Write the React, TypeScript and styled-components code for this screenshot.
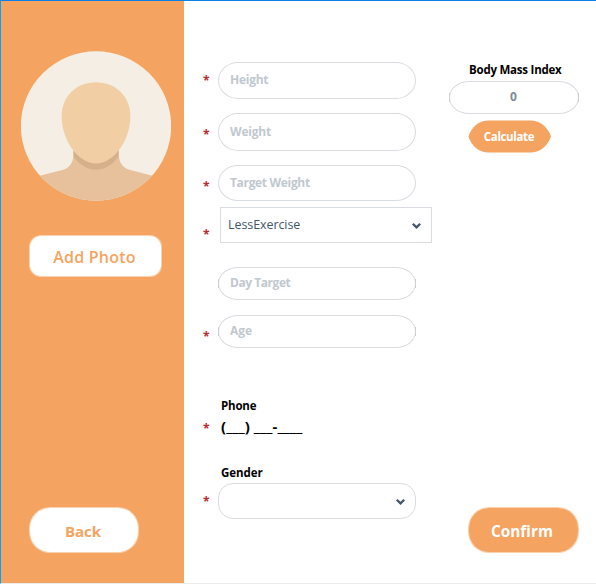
import React from "react";
import styled, { createGlobalStyle, css } from "styled-components";

const orange = "#f4a460";
const line = "#d9dce0";

const GlobalStyle = createGlobalStyle`
  * { box-sizing: border-box; }
  body { margin: 0; background: #fff; font-family: "Open Sans", "Noto Sans", sans-serif; }
  button { border: 0; padding: 0; margin: 0; font-family: inherit; cursor: pointer; }
`;

const Window = styled.div`
  display: grid;
  grid-template-columns: 183px 1fr;
  width: 596px;
  height: 584px;
  overflow: hidden;
  border-top: 1px solid #0a7fe6;
  border-left: 1px solid #07a2f8;
  border-bottom: 1px solid #ececec;
  background: #fff;
`;

const Sidebar = styled.aside`
  display: flex;
  flex-direction: column;
  align-items: flex-start;
  padding: 50px 0 30px 28px;
  background: ${orange};
`;

const Avatar = styled.svg`
  display: block;
  flex: none;
  width: 150px;
  height: 150px;
  margin-left: -8px;
`;

const Button = styled.button<{ $w: number; $h: number; $radius: string; $solid?: boolean; $size: number }>`
  display: flex;
  align-items: center;
  justify-content: center;
  flex: none;
  width: ${(p) => p.$w}px;
  height: ${(p) => p.$h}px;
  border: 1px solid ${(p) => (p.$solid ? "rgba(244, 164, 96, 0.5)" : "rgba(255, 255, 255, 0.5)")};
  border-radius: ${(p) => p.$radius};
  background: ${(p) => (p.$solid ? orange : "#fff")};
  background-clip: padding-box;
  color: ${(p) => (p.$solid ? "#fff" : orange)};
  font-size: ${(p) => p.$size}px;
  font-weight: 700;
`;

const PhotoButton = styled(Button)`
  margin-top: 34px;
  padding: 1px 2px 0 0;
  font-weight: 600;
`;

const BackButton = styled(Button)`
  margin-top: auto;
  padding: 1px 2px 0 0;
`;

const CalculateButton = styled(Button)`
  margin: 6px 0 0 19px;
  padding-right: 1px;
  border: 0;
  clip-path: path("M0.5 16.5 C3 8 10 0.5 21 0.5 H62 C73 0.5 80 8 83 16.5 C80 25 73 32.5 62 32.5 H21 C10 32.5 3 25 0.5 16.5 Z");
`;

const ConfirmButton = styled(Button)`
  margin: auto 0 0 19px;
  padding: 1px 3px 0 0;
`;

const Main = styled.main`
  display: grid;
  grid-template-columns: 248px 1fr;
`;

const Form = styled.form`
  display: flex;
  flex-direction: column;
  padding: 61px 0 0 19px;
`;

const Side = styled.section`
  display: flex;
  flex-direction: column;
  align-items: flex-start;
  padding: 61px 0 30px 17px;
`;

const Row = styled.div<{ $gap?: number }>`
  display: flex;
  align-items: flex-start;
  margin-top: ${(p) => p.$gap ?? 0}px;
`;

const Star = styled.span<{ $top: number }>`
  flex: none;
  width: 15px;
  height: 14px;
  margin-top: ${(p) => p.$top}px;
  color: #b8282c;
  font-size: 12px;
  font-weight: 700;
  line-height: 14px;
`;

const Text = styled.span<{ $track?: number }>`
  letter-spacing: ${(p) => p.$track ?? 0}px;
  white-space: nowrap;
`;

const ticks = css`
  &::before,
  &::after {
    content: "";
    position: absolute;
    top: 11px;
    width: 1px;
    height: 9px;
    background: #cdd1d6;
  }
  &::before { left: -1px; }
  &::after { right: -1px; }
`;

const Field = styled.div<{ $h: number; $w?: number; $ticks?: boolean }>`
  position: relative;
  display: flex;
  align-items: center;
  flex: none;
  width: ${(p) => p.$w ?? 198}px;
  height: ${(p) => p.$h}px;
  padding: 0 11px 2px;
  border: 1px solid ${line};
  border-radius: 20px / 50%;
  color: #c1c8cf;
  font-size: 12px;
  font-weight: 700;
  ${(p) => p.$ticks && ticks}
`;

const Value = styled(Field)`
  justify-content: center;
  padding-right: 12px;
  color: #7d8a96;
`;

const Select = styled.div<{ $w: number; $round?: boolean }>`
  display: flex;
  align-items: center;
  justify-content: space-between;
  width: ${(p) => p.$w}px;
  height: 36px;
  margin-left: ${(p) => (p.$round ? 0 : 2)}px;
  padding: 0 9px 1px 7px;
  border: 1px solid ${line};
  border-radius: ${(p) => (p.$round ? 15 : 0)}px;
  color: #44566c;
  font-size: 12.5px;
`;

const Chevron = styled.svg`
  width: 11px;
  height: 8px;
  margin-top: 3px;
`;

const Label = styled.div<{ $top?: number; $left?: number }>`
  margin: ${(p) => p.$top ?? 0}px 0 0 ${(p) => p.$left ?? 0}px;
  height: 16px;
  color: #000;
  font-size: 11.5px;
  font-weight: 700;
  line-height: 16px;
`;

const Mask = styled.div`
  height: 20px;
  margin: -1px 0 1px 3px;
  font-size: 15px;
  font-weight: 700;
  line-height: 20px;
`;

const Arrow = () => (
  <Chevron viewBox="0 0 11 8">
    <path d="M1.8 1.8 L5.5 5.4 L9.2 1.8" fill="none" stroke="#44566c" strokeWidth="2.3" />
  </Chevron>
);

export default function App() {
  return (
    <>
      <GlobalStyle />
      <Window>
        <Sidebar>
          <Avatar viewBox="63 62.5 450 450">
            <defs>
              <clipPath id="disc">
                <ellipse cx="288" cy="287.5" rx="225.5" ry="224" />
              </clipPath>
            </defs>
            <g clipPath="url(#disc)">
              <rect x="60" y="60" width="460" height="460" fill="#f5eee4" />
              <path d="M220 350 V376 C220 397 208 413 190 419 L110 439 V520 H466 V439 L388 419 C369 413 357 397 357 376 V350 Z" fill="#e6c19c" />
              <path d="M221 363 V380 C260 432 317 432 355 380 V363 Z" fill="#d5b08b" />
              <path d="M288 156 C347 156 391 198 391 259 C391 332 340 400 288 400 C236 400 185 332 185 259 C185 198 229 156 288 156 Z" fill="#f1cea4" />
            </g>
          </Avatar>
          <PhotoButton $w={133} $h={42} $radius="12px" $size={16}>
            <Text $track={0.2}>Add Photo</Text>
          </PhotoButton>
          <BackButton $w={110} $h={46} $radius="21px" $size={15}>
            <Text>Back</Text>
          </BackButton>
        </Sidebar>
        <Main>
          <Form>
            <Row>
              <Star $top={12}>*</Star>
              <Field $h={37}><Text $track={-0.25}>Height</Text></Field>
            </Row>
            <Row $gap={14}>
              <Star $top={15}>*</Star>
              <Field $h={38}><Text $track={-0.2}>Weight</Text></Field>
            </Row>
            <Row $gap={14}>
              <Star $top={15}>*</Star>
              <Field $h={36}><Text $track={-0.33}>Target Weight</Text></Field>
            </Row>
            <Row $gap={6}>
              <Star $top={21}>*</Star>
              <Select $w={212}><Text $track={-0.08}>LessExercise</Text><Arrow /></Select>
            </Row>
            <Row $gap={24}>
              <Star $top={0} />
              <Field $h={33} $ticks><Text $track={-0.45}>Day Target</Text></Field>
            </Row>
            <Row $gap={15}>
              <Star $top={15}>*</Star>
              <Field $h={33} $ticks><Text>Age</Text></Field>
            </Row>
            <Label $top={50} $left={18}><Text $track={-0.2}>Phone</Text></Label>
            <Row $gap={3}>
              <Star $top={5}>*</Star>
              <Mask><Text $track={0.05}>(___) ___-____</Text></Mask>
            </Row>
            <Label $top={28} $left={18}><Text $track={-0.05}>Gender</Text></Label>
            <Row $gap={2}>
              <Star $top={12}>*</Star>
              <Select $w={198} $round><span /><Arrow /></Select>
            </Row>
          </Form>
          <Side>
            <Label $left={20}><Text $track={-0.23}>Body Mass Index</Text></Label>
            <Row $gap={3}>
              <Value $h={33} $w={130} $ticks><Text>0</Text></Value>
            </Row>
            <CalculateButton $w={83} $h={33} $radius="0" $solid $size={11.5}>
              <Text $track={-0.35}>Calculate</Text>
            </CalculateButton>
            <ConfirmButton $w={111} $h={46} $radius="21px" $solid $size={15.3}>
              <Text>Confirm</Text>
            </ConfirmButton>
          </Side>
        </Main>
      </Window>
    </>
  );
}
